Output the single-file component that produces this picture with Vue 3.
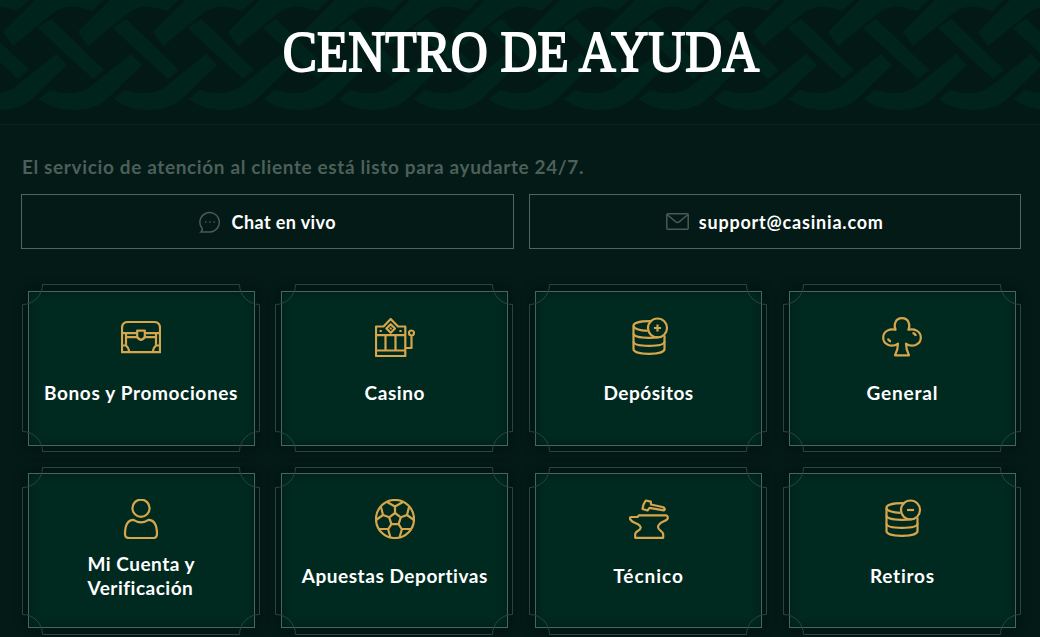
<template>
  <main class="help-center">
    <header class="hero">
      <svg class="hero-knots" aria-hidden="true">
        <defs>
          <pattern id="knot" width="75" height="124" patternUnits="userSpaceOnUse">
            <g v-for="n in 3" :key="n" :transform="`translate(${(n - 3) * 75} 0)`">
              <path d="M38 28 L51 19 L104 70 L93 79Z" />
              <path d="M39 99 L50 90 C65 95 80 94 90 87 L131 54 L142 65 L110 96 C101 106 89 110 74 110 C59 110 48 106 39 99Z" />
              <path d="M3 32 L37 -2 H106 L92 11 C75 5 64 5 52 14 L13 46Z" />
            </g>
            <path d="M38 28 L51 19 L104 70 L93 79Z" />
          </pattern>
        </defs>
        <rect width="100%" height="124" fill="url(#knot)" />
      </svg>
      <h1><span>CENTRO DE AYUDA</span></h1>
    </header>

    <section class="contact">
      <p>El servicio de atención al cliente está listo para ayudarte 24/7.</p>
      <div class="contact-row">
        <a class="contact-btn chat" href="#">
          <svg width="22" height="22" viewBox="0 0 22 22">
            <path d="M3.2 17.6 A9.7 9.7 0 1 1 11 21 H2 Q3.6 19.6 3.2 17.6Z" />
            <path d="M6 11h1.4M10.3 11h1.4M14.6 11H16" stroke-width="1.6" />
          </svg>
          <span>Chat en vivo</span>
        </a>
        <a class="contact-btn mail" href="#">
          <svg width="23" height="17" viewBox="0 0 23 17">
            <rect x=".8" y=".8" width="21.4" height="15.4" rx="1" />
            <path d="M1 1.5 L9.8 8.8 Q11.5 10 13.2 8.8 L22 1.5" />
          </svg>
          <span>support@casinia.com</span>
        </a>
      </div>
    </section>

    <nav class="topics">
      <a v-for="topic in topics" :key="topic.label" class="card" href="#">
        <svg class="frame" viewBox="0 0 238 168" aria-hidden="true">
          <path d="M20.5 .5 H217.5 A20 20 0 0 0 237.5 20.5 V147.5 A20 20 0 0 0 217.5 167.5 H20.5 A20 20 0 0 0 .5 147.5 V20.5 A20 20 0 0 0 20.5 .5Z" />
        </svg>
        <div class="card-body">
          <svg class="icon" viewBox="0 0 40 40" aria-hidden="true">
            <path v-for="d in topic.paths" :key="d" :d="d" />
          </svg>
          <div class="label">
            <span :class="{ wrap: topic.wrap }" :style="{ letterSpacing: topic.spacing + 'px' }">{{ topic.label }}</span>
          </div>
        </div>
      </a>
    </nav>
  </main>
</template>

<script setup>
const coins = [
  'M18.5 13.8 C10 13.8 4.5 11.5 4.5 8.8 C4.5 6 11 4.2 20.5 4.2 H23',
  'M4.5 9 V32 C4.5 35 11 36.8 20 36.8 S35.5 35 35.5 32 V18.5',
  'M4.5 16.5 C4.5 19.5 12 20.8 20 20.8 C24 20.8 27 20.6 29.5 20.2',
  'M4.5 24.5 C4.5 27.5 11 28.8 20 28.8 S35.5 27.5 35.5 24.5',
  'M38 11 A9.5 9.5 0 1 1 19 11 A9.5 9.5 0 1 1 38 11Z',
];

const topics = [
  {
    label: 'Bonos y Promociones',
    spacing: 0.65,
    paths: [
      'M1 35.2 V11 Q1 5 7 5 H33 Q39 5 39 11 V35.2Z',
      'M1 16.2 H16 M24 16.2 H39 M5 20.2 H16 M24 20.2 H35',
      'M5 16.2 V28.5 M35 16.2 V28.5 M1 28.5 H5 Q8 31 8 35 M39 28.5 H35 Q32 31 32 35',
      'M16.2 13.6 H23.8 V19.5 Q23.5 21.5 20 23 Q16.5 21.5 16.2 19.5Z',
    ],
  },
  {
    label: 'Casino',
    spacing: 0.6,
    paths: [
      'M1 39 V9.5 H8.5 L15.7 2 L23 9.5 H30.3 V39Z',
      'M15.7 7.2 L20 11.5 L15.7 15.8 L11.4 11.5Z',
      'M15.7 10.5 V12.5 M5.7 12.9 V14.9 M25.5 12.9 V14.9',
      'M1 18.2 H30.3 M1 33.5 H30.3 M10.5 18.2 V33.5 M20.5 18.2 V33.5',
      'M39 16 A2.5 2.5 0 1 1 34 16 A2.5 2.5 0 1 1 39 16Z M36.5 18.5 V31 H30.3',
    ],
  },
  {
    label: 'Depósitos',
    spacing: 0.5,
    paths: [...coins, 'M25 11 H32 M28.5 7.5 V14.5'],
  },
  {
    label: 'General',
    spacing: 0.8,
    paths: [
      'M13.6 12.8 C11.5 9 12.8 1.2 20 1.2 S28.5 9 26.4 12.8 C32 11.2 38.8 14 38.8 20.6 C38.8 28 30 31 24 26.6 Q24 33 27 38.3 H13 Q16 33 16 26.6 C10 31 1.2 28 1.2 20.6 C1.2 14 8 11.2 13.6 12.8Z',
      'M30.5 16.2 Q33.3 16.4 33.8 19 M6 21.5 Q6.5 24 9 24.3',
    ],
  },
  {
    label: 'Mi Cuenta y Verificación',
    spacing: 0.5,
    wrap: true,
    paths: [
      'M28.6 9.2 A8.6 8.6 0 1 1 11.4 9.2 A8.6 8.6 0 1 1 28.6 9.2Z',
      'M12.5 20.8 Q20 25.8 27.5 20.8 C33 21 36 26.5 36 35 Q36 39.2 31.5 39.2 H8.5 Q4 39.2 4 35 C4 26.5 7 21 12.5 20.8Z',
    ],
  },
  {
    label: 'Apuestas Deportivas',
    spacing: 0.55,
    paths: [
      'M39 20 A19 19 0 1 1 1 20 A19 19 0 1 1 39 20Z',
      'M20 14 L25.8 18.3 L23.6 25.2 H16.4 L14.2 18.3Z',
      'M20 14 V7.5 M25.8 18.3 L32 16 M23.6 25.2 L27 30.5 M16.4 25.2 L13 30.5 M14.2 18.3 L8 16',
      'M12 3 L20 7.5 L28 3 M34 8 L32 16 L39 21 M36 30 H27 L24.5 38.5 M4 30 H13 L15.5 38.5 M6 8 L8 16 L1 21',
    ],
  },
  {
    label: 'Técnico',
    spacing: 1,
    paths: [
      'M10 16.3 H37 Q39.5 17 38.5 20 C36 23 29.5 23 29 28 C29 31.5 33.8 32 34.2 35 V38.8 H6.2 V35 C7 31.5 11.5 32 11.7 28.5 C11 23.5 3 25 .8 19.5 Q.7 18 2.5 18 H8.5Z',
      'M16.8 1.5 L21.8 2.6 L22 5.5 L34.5 8.3 Q37 10.5 34.8 11.4 L20.5 8.8 L18.5 11.5 L13.5 10 L14.5 5.5Z',
    ],
  },
  {
    label: 'Retiros',
    spacing: 0.75,
    paths: [...coins, 'M25 11 H32'],
  },
];
</script>

<style>
body {
  margin: 0;
  background: #041a16;
}
</style>

<style scoped>
.help-center {
  height: 637px;
  overflow: hidden;
  box-sizing: border-box;
  font-family: Lato, "Liberation Sans", sans-serif;
  color: #fff;
  background: #031a16;
}
.hero {
  position: relative;
  height: 124px;
  border-bottom: 1px solid #08221d;
  background: #031915;
}
.hero-knots {
  position: absolute;
  inset: 0;
  width: 100%;
  height: 124px;
  fill: #00231b;
  filter: blur(0.7px);
}
.hero h1 {
  position: relative;
  margin: 0;
  padding-top: 20px;
  text-align: center;
  font: 400 57px/64px "Liberation Serif", serif;
  letter-spacing: 0;
  white-space: nowrap;
  -webkit-text-stroke: 1.8px #fff;
}
.hero h1 span {
  display: inline-block;
  transform: translateX(1px) scaleX(0.899);
}
.contact {
  padding: 30px 19px 0 21px;
}
.contact p {
  margin: 0;
  padding-left: 1px;
  font-size: 19px;
  font-weight: 700;
  line-height: 24px;
  letter-spacing: 0.63px;
  color: #4c5f59;
  white-space: nowrap;
}
.contact-row {
  display: flex;
  gap: 15px;
  margin-top: 15px;
}
.contact-btn {
  flex: 1;
  display: flex;
  align-items: center;
  justify-content: center;
  gap: 11px;
  height: 55px;
  box-sizing: border-box;
  border: 1px solid #4b6860;
  color: #fff;
  font-size: 18px;
  font-weight: 700;
  text-decoration: none;
  letter-spacing: 0.4px;
}
.contact-btn.mail {
  gap: 10px;
  letter-spacing: 0.8px;
}
.contact-btn svg {
  fill: none;
  stroke: #485b55;
  stroke-width: 1.5;
}
.topics {
  display: grid;
  grid-template-columns: repeat(4, 238px);
  gap: 15px 15.8px;
  padding: 35px 18px 0 21.5px;
}
.card {
  position: relative;
  height: 168px;
  box-sizing: border-box;
  padding: 7px 5px 6px 6px;
  color: #fff;
  text-decoration: none;
}
.card:nth-child(n + 5) {
  padding-top: 6px;
}
.frame {
  position: absolute;
  inset: 0;
  width: 238px;
  height: 168px;
  z-index: 1;
  fill: none;
  stroke: #2a453d;
}
.card-body {
  display: flex;
  flex-direction: column;
  align-items: center;
  height: 155px;
  box-sizing: border-box;
  padding-top: 25px;
  border: 1px solid #47675d;
  background: #00291f;
  box-shadow: 0 0 12px rgba(0, 8, 6, 0.4), inset 0 0 7px rgba(0, 16, 12, 0.5);
}
.icon {
  width: 40px;
  height: 40px;
  flex: none;
  fill: none;
  stroke: #d5a64c;
  stroke-width: 2.2;
  stroke-linejoin: round;
}
.label {
  display: flex;
  align-items: center;
  justify-content: center;
  width: 210px;
  height: 48px;
  margin-top: 12px;
  font-size: 19px;
  font-weight: 700;
  line-height: 24px;
}
.card:nth-child(n + 5) .label {
  margin-top: 13px;
}
.label span {
  white-space: nowrap;
}
.label .wrap {
  width: 112px;
  margin-left: 5px;
  white-space: normal;
}
</style>
